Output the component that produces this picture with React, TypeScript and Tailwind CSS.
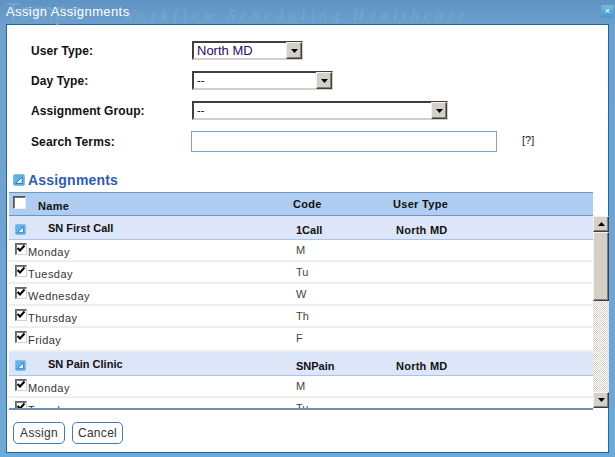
const FONT = "font-['Liberation_Sans',Arial,sans-serif]";

function CollapseIcon({ size = 12 }: { size?: number }) {
  return (
    <svg width={size} height={size} viewBox="0 0 12 12" className="shrink-0">
      <rect x="0.5" y="0.5" width="11" height="11" rx="1.5" fill="#5fb4e6" stroke="#7cc0ea" />
      <path d="M2.5 9.5 L9 3 L9.5 9.5 Z" fill="#dff1fb" stroke="#2f6fb5" strokeWidth="0.9" />
    </svg>
  );
}

function Arrow({ down = true }: { down?: boolean }) {
  return (
    <svg width="7" height="4" viewBox="0 0 7 4">
      <path d={down ? "M0 0H7L3.5 4Z" : "M0 4H7L3.5 0Z"} fill="#000" />
    </svg>
  );
}

function WinButton({ down = true, className = "" }: { down?: boolean; className?: string }) {
  return (
    <div
      className={`flex items-center justify-center bg-[#d4d0c8] border border-t-[#f4f2ee] border-l-[#f4f2ee] border-r-[#404040] border-b-[#404040] shadow-[inset_-1px_-1px_0_#808080] ${className}`}
    >
      <Arrow down={down} />
    </div>
  );
}

function FakeSelect({ value, width, color = "text-black", size = "text-[11px]" }: { value: string; width: string; color?: string; size?: string }) {
  return (
    <div className={`flex h-[19px] bg-white border-2 border-t-[#404040] border-l-[#404040] border-r-[#d4d0c8] border-b-[#d4d0c8] ${width}`}>
      <div className={`flex-1 pl-[3px] leading-[15px] ${size} ${color}`}>{value}</div>
      <WinButton className="w-[16px] h-[17px] -mt-[1px] -mr-[1px] shrink-0" />
    </div>
  );
}

function Checkbox({ checked = true }: { checked?: boolean }) {
  return (
    <div className="w-[12px] h-[12px] shrink-0 bg-white border border-t-[#666] border-l-[#666] border-r-[#d4d0c8] border-b-[#d4d0c8] shadow-[inset_1px_1px_0_#777]">
      {checked && (
        <svg width="10" height="10" viewBox="0 0 10 10">
          <path d="M1.5 4 L4 6.5 L8.5 1.5" fill="none" stroke="#000" strokeWidth="2" />
        </svg>
      )}
    </div>
  );
}

function FormRow({ label, children, className = "" }: { label: string; children: React.ReactNode; className?: string }) {
  return (
    <div className={`flex items-center ${className}`}>
      <div className="w-[161px] text-[12px] font-bold text-[#111] tracking-[0.1px]">{label}</div>
      {children}
    </div>
  );
}

function DayRow({ day, code, height = "h-[22px]" }: { day: string; code: string; height?: string }) {
  return (
    <div className={`flex border-b-2 border-[#eeeeee] bg-white ${height}`}>
      <div className="w-[287px] flex pl-[6px] pt-[3px]">
        <Checkbox />
        <span className="ml-[1px] mt-[2px] text-[11px] tracking-[0.45px] text-[#333] leading-[14px]">{day}</span>
      </div>
      <div className="text-[11px] text-[#444] pt-[3px] leading-[14px]">{code}</div>
    </div>
  );
}

function GroupRow({ name, code }: { name: string; code: string }) {
  return (
    <div className="flex h-[24px] bg-[#dde6f8] border-b border-[#a9c4e4] text-[11px] font-bold text-[#111]">
      <div className="w-[287px] flex">
        <div className="pl-[6px] pt-[8px]">
          <CollapseIcon size={11} />
        </div>
        <div className="ml-[22px] leading-[14px] pt-[5px]">{name}</div>
      </div>
      <div className="w-[100px] pt-[7px] leading-[14px]">{code}</div>
      <div className="pt-[7px] leading-[14px] tracking-[0.25px]">North MD</div>
    </div>
  );
}

function Scrollbar() {
  return (
    <div className="w-[16px] flex flex-col h-[192px] bg-[repeating-conic-gradient(#d4d0c8_0_25%,#ffffff_0_50%)] bg-[length:2px_2px]">
      <WinButton down={false} className="h-[16px] w-full" />
      <div className="h-[69px] bg-[#d4d0c8] border border-t-[#f4f2ee] border-l-[#f4f2ee] border-r-[#404040] border-b-[#404040] shadow-[inset_-1px_-1px_0_#808080]" />
      <div className="flex-1" />
      <WinButton className="h-[16px] w-full" />
    </div>
  );
}

export default function App() {
  return (
    <div className={`${FONT} relative w-[615px] h-[457px] overflow-hidden flex flex-col bg-[linear-gradient(#6fa0cf,#6ea9d8)]`}>
      {/* title bar */}
      <div className="relative h-[24px] shrink-0 flex items-center pl-[6px] bg-[linear-gradient(#5e93c4,#6d9fcc)]">
        <span className="absolute left-[6px] top-[0px] text-[24px] leading-[24px] tracking-[1px] text-[#78a6d0]">Tempo</span>
        <span className="absolute left-[122px] top-[7px] italic font-['Liberation_Serif',serif] text-[15px] leading-[17px] tracking-[5px] text-[#7aa8d1] whitespace-nowrap">Workflow Scheduling Healthcare</span>
        <span className="relative text-[13px] text-white tracking-[0.4px]">Assign Assignments</span>
        <div className="absolute right-[1px] top-[5px] w-[13px] h-[13px] rounded-[2px] bg-[linear-gradient(#7db8dc,#3f9ad0)] flex items-center justify-center text-white text-[9px] leading-none">×</div>
      </div>

      {/* panel */}
      <div className="mx-[6px] h-[429px] bg-white border border-[#1a6aa8] flex flex-col">
        <div className="pl-[24px] pt-[16px] flex flex-col">
          <FormRow label="User Type:" className="h-[19px]">
            <FakeSelect value="North MD" width="w-[111px]" color="text-[#2a0a6a]" size="text-[13px]" />
          </FormRow>
          <FormRow label="Day Type:" className="h-[19px] mt-[11px]">
            <FakeSelect value="--" width="w-[141px]" />
          </FormRow>
          <FormRow label="Assignment Group:" className="h-[19px] mt-[11px]">
            <FakeSelect value="--" width="w-[256px]" />
          </FormRow>
          <FormRow label="Search Terms:" className="h-[21px] mt-[11px]">
            <div className="w-[306px] h-[21px] -ml-[1px] border border-[#84a5c4] bg-white" />
            <span className="ml-[25px] -mt-[3px] text-[11px] text-[#222]">[?]</span>
          </FormRow>
        </div>

        <div className="flex items-center pl-[6px] mt-[19px] h-[18px]">
          <CollapseIcon />
          <span className="ml-[3px] text-[14px] font-bold text-[#2f5cb0] tracking-[0.2px]">Assignments</span>
        </div>

        <div className="ml-[2px] mt-[3px] flex flex-col">
          {/* table header */}
          <div className="flex h-[24px] w-[584px] bg-[#aecdf0] border-y border-[#6a96c6] text-[11px] font-bold text-[#111] tracking-[0.3px]">
            <div className="pl-[4px] pt-[3px]">
              <div className="w-[13px] h-[13px] bg-white border border-t-[#555] border-l-[#555] border-r-[#eee] border-b-[#eee] shadow-[inset_1px_1px_0_#777]" />
            </div>
            <div className="w-[255px] ml-[12px] pt-[6px] leading-[14px]">Name</div>
            <div className="w-[100px] pt-[4px] leading-[14px]">Code</div>
            <div className="pt-[4px] leading-[14px]">User Type</div>
          </div>

          {/* table body */}
          <div className="flex h-[192px] w-[600px] overflow-hidden">
            <div className="w-[584px] overflow-hidden">
              <GroupRow name="SN First Call" code="1Call" />
              <DayRow day="Monday" code="M" />
              <DayRow day="Tuesday" code="Tu" />
              <DayRow day="Wednesday" code="W" />
              <DayRow day="Thursday" code="Th" />
              <DayRow day="Friday" code="F" height="h-[24px]" />
              <GroupRow name="SN Pain Clinic" code="SNPain" />
              <DayRow day="Monday" code="M" />
              <DayRow day="Tuesday" code="Tu" />
            </div>
            <Scrollbar />
          </div>
          <div className="h-[2px] w-[584px] bg-[#6a90b8]" />
        </div>

        <div className="flex gap-[7px] pl-[6px] mt-[12px]">
          <button className="w-[52px] h-[22px] rounded-[5px] border border-[#3d7fb8] bg-white text-[12px] text-[#333] tracking-[0.3px]">Assign</button>
          <button className="w-[51px] h-[22px] rounded-[5px] border border-[#3d7fb8] bg-white text-[12px] text-[#333] tracking-[0.3px]">Cancel</button>
        </div>
      </div>
    </div>
  );
}
